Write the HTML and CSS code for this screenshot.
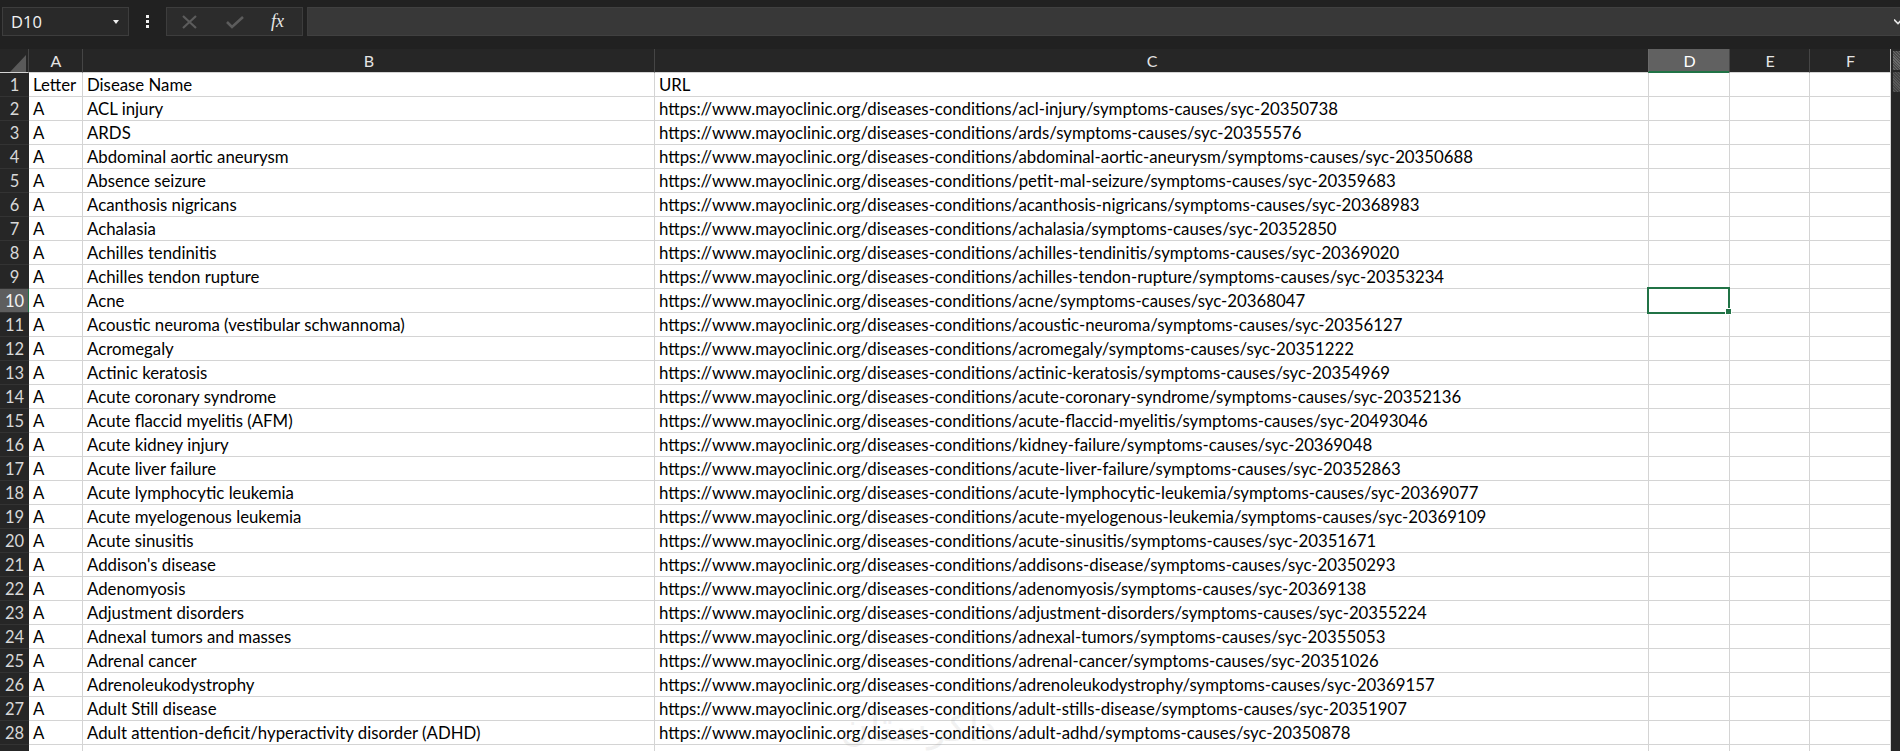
FILE: index.html
```html
<!DOCTYPE html>
<html>
<head>
<meta charset="utf-8">
<link rel="stylesheet" href="styles.css">
</head>
<body>
<div class="toolbar">
  <div class="namebox"><span class="ref">D10</span><span class="caret"></span></div>
  <div class="dots"><i></i><i></i><i></i></div>
  <div class="fbtns">
    <svg class="ico" width="17" height="14" viewBox="0 0 17 14"><path d="M2 1 L15 13 M15 1 L2 13" stroke="#5c5c5c" stroke-width="2.2" fill="none"/></svg>
    <svg class="ico" width="18" height="14" viewBox="0 0 18 14"><path d="M1 7 L6 12 L17 2" stroke="#5c5c5c" stroke-width="2.6" fill="none"/></svg>
    <span class="fx">fx</span>
  </div>
  <div class="finput"><svg class="chev" width="8" height="6" viewBox="0 0 8 6"><path d="M0 0.5 L4 4.5 L8 0.5" stroke="#e6e6e6" stroke-width="1.6" fill="none"/></svg></div>
</div>
<div class="sheet">
  <div class="grid">
    <div class="r head">
      <div class="corner"><svg width="29" height="23" viewBox="0 0 29 23"><polygon points="10,23 26,23 26,6" fill="#5a5a5a"/></svg></div>
      <div class="ch">A</div><div class="ch">B</div><div class="ch">C</div><div class="ch selh">D</div><div class="ch">E</div><div class="ch">F</div>
    </div>
    <div class="r"><div class="h">1</div><div class="c">Letter</div><div class="c">Disease Name</div><div class="c">URL</div><div class="c"></div><div class="c"></div><div class="c"></div></div>
    <div class="r"><div class="h">2</div><div class="c">A</div><div class="c">ACL injury</div><div class="c">https://www.mayoclinic.org/diseases-conditions/acl-injury/symptoms-causes/syc-20350738</div><div class="c"></div><div class="c"></div><div class="c"></div></div>
    <div class="r"><div class="h">3</div><div class="c">A</div><div class="c">ARDS</div><div class="c">https://www.mayoclinic.org/diseases-conditions/ards/symptoms-causes/syc-20355576</div><div class="c"></div><div class="c"></div><div class="c"></div></div>
    <div class="r"><div class="h">4</div><div class="c">A</div><div class="c">Abdominal aortic aneurysm</div><div class="c">https://www.mayoclinic.org/diseases-conditions/abdominal-aortic-aneurysm/symptoms-causes/syc-20350688</div><div class="c"></div><div class="c"></div><div class="c"></div></div>
    <div class="r"><div class="h">5</div><div class="c">A</div><div class="c">Absence seizure</div><div class="c">https://www.mayoclinic.org/diseases-conditions/petit-mal-seizure/symptoms-causes/syc-20359683</div><div class="c"></div><div class="c"></div><div class="c"></div></div>
    <div class="r"><div class="h">6</div><div class="c">A</div><div class="c">Acanthosis nigricans</div><div class="c">https://www.mayoclinic.org/diseases-conditions/acanthosis-nigricans/symptoms-causes/syc-20368983</div><div class="c"></div><div class="c"></div><div class="c"></div></div>
    <div class="r"><div class="h">7</div><div class="c">A</div><div class="c">Achalasia</div><div class="c">https://www.mayoclinic.org/diseases-conditions/achalasia/symptoms-causes/syc-20352850</div><div class="c"></div><div class="c"></div><div class="c"></div></div>
    <div class="r"><div class="h">8</div><div class="c">A</div><div class="c">Achilles tendinitis</div><div class="c">https://www.mayoclinic.org/diseases-conditions/achilles-tendinitis/symptoms-causes/syc-20369020</div><div class="c"></div><div class="c"></div><div class="c"></div></div>
    <div class="r"><div class="h">9</div><div class="c">A</div><div class="c">Achilles tendon rupture</div><div class="c">https://www.mayoclinic.org/diseases-conditions/achilles-tendon-rupture/symptoms-causes/syc-20353234</div><div class="c"></div><div class="c"></div><div class="c"></div></div>
    <div class="r"><div class="h selr">10</div><div class="c">A</div><div class="c">Acne</div><div class="c">https://www.mayoclinic.org/diseases-conditions/acne/symptoms-causes/syc-20368047</div><div class="c sel"></div><div class="c"></div><div class="c"></div></div>
    <div class="r"><div class="h">11</div><div class="c">A</div><div class="c">Acoustic neuroma (vestibular schwannoma)</div><div class="c">https://www.mayoclinic.org/diseases-conditions/acoustic-neuroma/symptoms-causes/syc-20356127</div><div class="c"></div><div class="c"></div><div class="c"></div></div>
    <div class="r"><div class="h">12</div><div class="c">A</div><div class="c">Acromegaly</div><div class="c">https://www.mayoclinic.org/diseases-conditions/acromegaly/symptoms-causes/syc-20351222</div><div class="c"></div><div class="c"></div><div class="c"></div></div>
    <div class="r"><div class="h">13</div><div class="c">A</div><div class="c">Actinic keratosis</div><div class="c">https://www.mayoclinic.org/diseases-conditions/actinic-keratosis/symptoms-causes/syc-20354969</div><div class="c"></div><div class="c"></div><div class="c"></div></div>
    <div class="r"><div class="h">14</div><div class="c">A</div><div class="c">Acute coronary syndrome</div><div class="c">https://www.mayoclinic.org/diseases-conditions/acute-coronary-syndrome/symptoms-causes/syc-20352136</div><div class="c"></div><div class="c"></div><div class="c"></div></div>
    <div class="r"><div class="h">15</div><div class="c">A</div><div class="c">Acute flaccid myelitis (AFM)</div><div class="c">https://www.mayoclinic.org/diseases-conditions/acute-flaccid-myelitis/symptoms-causes/syc-20493046</div><div class="c"></div><div class="c"></div><div class="c"></div></div>
    <div class="r"><div class="h">16</div><div class="c">A</div><div class="c">Acute kidney injury</div><div class="c">https://www.mayoclinic.org/diseases-conditions/kidney-failure/symptoms-causes/syc-20369048</div><div class="c"></div><div class="c"></div><div class="c"></div></div>
    <div class="r"><div class="h">17</div><div class="c">A</div><div class="c">Acute liver failure</div><div class="c">https://www.mayoclinic.org/diseases-conditions/acute-liver-failure/symptoms-causes/syc-20352863</div><div class="c"></div><div class="c"></div><div class="c"></div></div>
    <div class="r"><div class="h">18</div><div class="c">A</div><div class="c">Acute lymphocytic leukemia</div><div class="c">https://www.mayoclinic.org/diseases-conditions/acute-lymphocytic-leukemia/symptoms-causes/syc-20369077</div><div class="c"></div><div class="c"></div><div class="c"></div></div>
    <div class="r"><div class="h">19</div><div class="c">A</div><div class="c">Acute myelogenous leukemia</div><div class="c">https://www.mayoclinic.org/diseases-conditions/acute-myelogenous-leukemia/symptoms-causes/syc-20369109</div><div class="c"></div><div class="c"></div><div class="c"></div></div>
    <div class="r"><div class="h">20</div><div class="c">A</div><div class="c">Acute sinusitis</div><div class="c">https://www.mayoclinic.org/diseases-conditions/acute-sinusitis/symptoms-causes/syc-20351671</div><div class="c"></div><div class="c"></div><div class="c"></div></div>
    <div class="r"><div class="h">21</div><div class="c">A</div><div class="c">Addison's disease</div><div class="c">https://www.mayoclinic.org/diseases-conditions/addisons-disease/symptoms-causes/syc-20350293</div><div class="c"></div><div class="c"></div><div class="c"></div></div>
    <div class="r"><div class="h">22</div><div class="c">A</div><div class="c">Adenomyosis</div><div class="c">https://www.mayoclinic.org/diseases-conditions/adenomyosis/symptoms-causes/syc-20369138</div><div class="c"></div><div class="c"></div><div class="c"></div></div>
    <div class="r"><div class="h">23</div><div class="c">A</div><div class="c">Adjustment disorders</div><div class="c">https://www.mayoclinic.org/diseases-conditions/adjustment-disorders/symptoms-causes/syc-20355224</div><div class="c"></div><div class="c"></div><div class="c"></div></div>
    <div class="r"><div class="h">24</div><div class="c">A</div><div class="c">Adnexal tumors and masses</div><div class="c">https://www.mayoclinic.org/diseases-conditions/adnexal-tumors/symptoms-causes/syc-20355053</div><div class="c"></div><div class="c"></div><div class="c"></div></div>
    <div class="r"><div class="h">25</div><div class="c">A</div><div class="c">Adrenal cancer</div><div class="c">https://www.mayoclinic.org/diseases-conditions/adrenal-cancer/symptoms-causes/syc-20351026</div><div class="c"></div><div class="c"></div><div class="c"></div></div>
    <div class="r"><div class="h">26</div><div class="c">A</div><div class="c">Adrenoleukodystrophy</div><div class="c">https://www.mayoclinic.org/diseases-conditions/adrenoleukodystrophy/symptoms-causes/syc-20369157</div><div class="c"></div><div class="c"></div><div class="c"></div></div>
    <div class="r"><div class="h">27</div><div class="c">A</div><div class="c">Adult Still disease</div><div class="c">https://www.mayoclinic.org/diseases-conditions/adult-stills-disease/symptoms-causes/syc-20351907</div><div class="c"></div><div class="c"></div><div class="c"></div></div>
    <div class="r"><div class="h">28</div><div class="c">A</div><div class="c">Adult attention-deficit/hyperactivity disorder (ADHD)</div><div class="c">https://www.mayoclinic.org/diseases-conditions/adult-adhd/symptoms-causes/syc-20350878</div><div class="c"></div><div class="c"></div><div class="c"></div></div>
    <div class="r last"><div class="h"></div><div class="c"></div><div class="c"></div><div class="c"></div><div class="c"></div><div class="c"></div><div class="c"></div></div>
  </div>
  <div class="vscroll"><div class="arrowbox"></div><div class="thumb"></div></div>
  <div class="watermark">ذاکرستان</div>
</div>
</body>
</html>
```

FILE: styles.css
```css
html, body {
  margin: 0;
  padding: 0;
  background: #212121;
  overflow: hidden;
  height: 751px;
}
body {
  font-family: Lato, "Open Sans", sans-serif;
}
.toolbar {
  height: 49px;
  box-sizing: border-box;
  padding-top: 7px;
  display: flex;
  align-items: flex-start;
  background: #212121;
}
.namebox {
  margin-left: 2px;
  width: 127px;
  height: 29px;
  box-sizing: border-box;
  background: #292929;
  border: 1px solid #3d3d3d;
  display: flex;
  align-items: center;
  justify-content: space-between;
  padding: 0 9px 0 8px;
  color: #f2f2f2;
  font-family: "Open Sans", Lato, sans-serif;
  font-size: 16.5px;
}
.caret {
  width: 0;
  height: 0;
  border-left: 3.5px solid transparent;
  border-right: 3.5px solid transparent;
  border-top: 4px solid #f0f0f0;
}
.dots {
  width: 37px;
  height: 29px;
  display: flex;
  flex-direction: column;
  align-items: center;
  justify-content: center;
  gap: 2px;
}
.dots i {
  display: block;
  width: 3px;
  height: 3px;
  background: #f0f0f0;
}
.fbtns {
  width: 137px;
  height: 29px;
  box-sizing: border-box;
  background: #2c2c2c;
  border: 1px solid #3d3d3d;
  display: flex;
  align-items: center;
  padding-left: 14px;
  gap: 28px;
}
.ico {
  display: block;
}
.fx {
  font-family: "Liberation Serif", serif;
  font-style: italic;
  font-size: 18px;
  color: #e8e8e8;
  margin-left: -1px;
  line-height: 1;
  margin-top: -2px;
}
.finput {
  margin-left: 4px;
  flex: 1;
  height: 29px;
  box-sizing: border-box;
  background: #383838;
  border-top: 1px solid #404040;
  border-bottom: 1px solid #404040;
  border-left: 1px solid #3d3d3d;
  display: flex;
  align-items: center;
  justify-content: flex-end;
}
.chev {
  display: block;
  margin-right: -2px;
}
.sheet {
  display: flex;
  position: relative;
}
.grid {
  width: 1890px;
  background: #ffffff;
}
.r {
  display: grid;
  grid-template-columns: 29px 54px 572px 994px 81px 80px 81px;
  height: 24px;
}
.r.head {
  background: #262626;
  height: 24px;
}
.corner {
  height: 23px;
  border-bottom: 1px solid #d4d4d4;
}
.corner svg {
  display: block;
}
.ch {
  box-sizing: border-box;
  height: 24px;
  border-bottom: 1px solid #d4d4d4;
  border-left: 1px solid #454545;
  margin-left: -1px;
  color: #e4e4e4;
  font-size: 16px;
  text-align: center;
  line-height: 23px;
}
.ch.selh {
  background: #616161;
  border-bottom: 2px solid #217346;
  border-left-color: #6a6a6a;
  line-height: 23px;
  color: #ffffff;
}
.h {
  background: #262626;
  color: #d8d8d8;
  font-size: 16.5px;
  text-align: center;
  line-height: 24px;
  height: 24px;
  box-sizing: border-box;
  border-bottom: 1px solid #333333;
}
.h.selr {
  background: #5e5e5e;
  color: #f2f2f2;
  box-shadow: inset -1px 0 0 #217346;
}
.c {
  position: relative;
  box-sizing: border-box;
  height: 24px;
  border-right: 1px solid #d4d4d4;
  border-bottom: 1px solid #d4d4d4;
  padding: 1px 0 0 4px;
  color: #000000;
  font-size: 16.8px;
  line-height: 22px;
  white-space: nowrap;
  overflow: visible;
}
.r .c:nth-child(2) {
  overflow: hidden;
}
.c.sel::after {
  content: "";
  position: absolute;
  left: -2px;
  top: -2px;
  width: 83px;
  height: 27px;
  box-sizing: border-box;
  border: 2px solid #217346;
  z-index: 2;
}
.c.sel::before {
  content: "";
  position: absolute;
  right: -3px;
  bottom: -3px;
  width: 5px;
  height: 5px;
  background: #217346;
  border: 1px solid #ffffff;
  z-index: 3;
}
.vscroll {
  width: 10px;
  background: #262626;
  border-left: 1px solid #bdbdbd;
  box-sizing: border-box;
  padding: 2px 0 0 2px;
}
.arrowbox {
  width: 8px;
  height: 19px;
  background: repeating-linear-gradient(45deg, #4a4a4a 0 1px, #6a6a6a 1px 2px);
  margin-bottom: 2px;
}
.thumb {
  width: 8px;
  height: 20px;
  background: repeating-linear-gradient(45deg, #444 0 1px, #5a5a5a 1px 2px);
}
.watermark {
  position: absolute;
  left: 840px;
  top: 655px;
  font-family: "DejaVu Sans", sans-serif;
  font-size: 40px;
  line-height: 46px;
  color: rgba(150, 150, 150, 0.12);
  direction: rtl;
  pointer-events: none;
}
```
